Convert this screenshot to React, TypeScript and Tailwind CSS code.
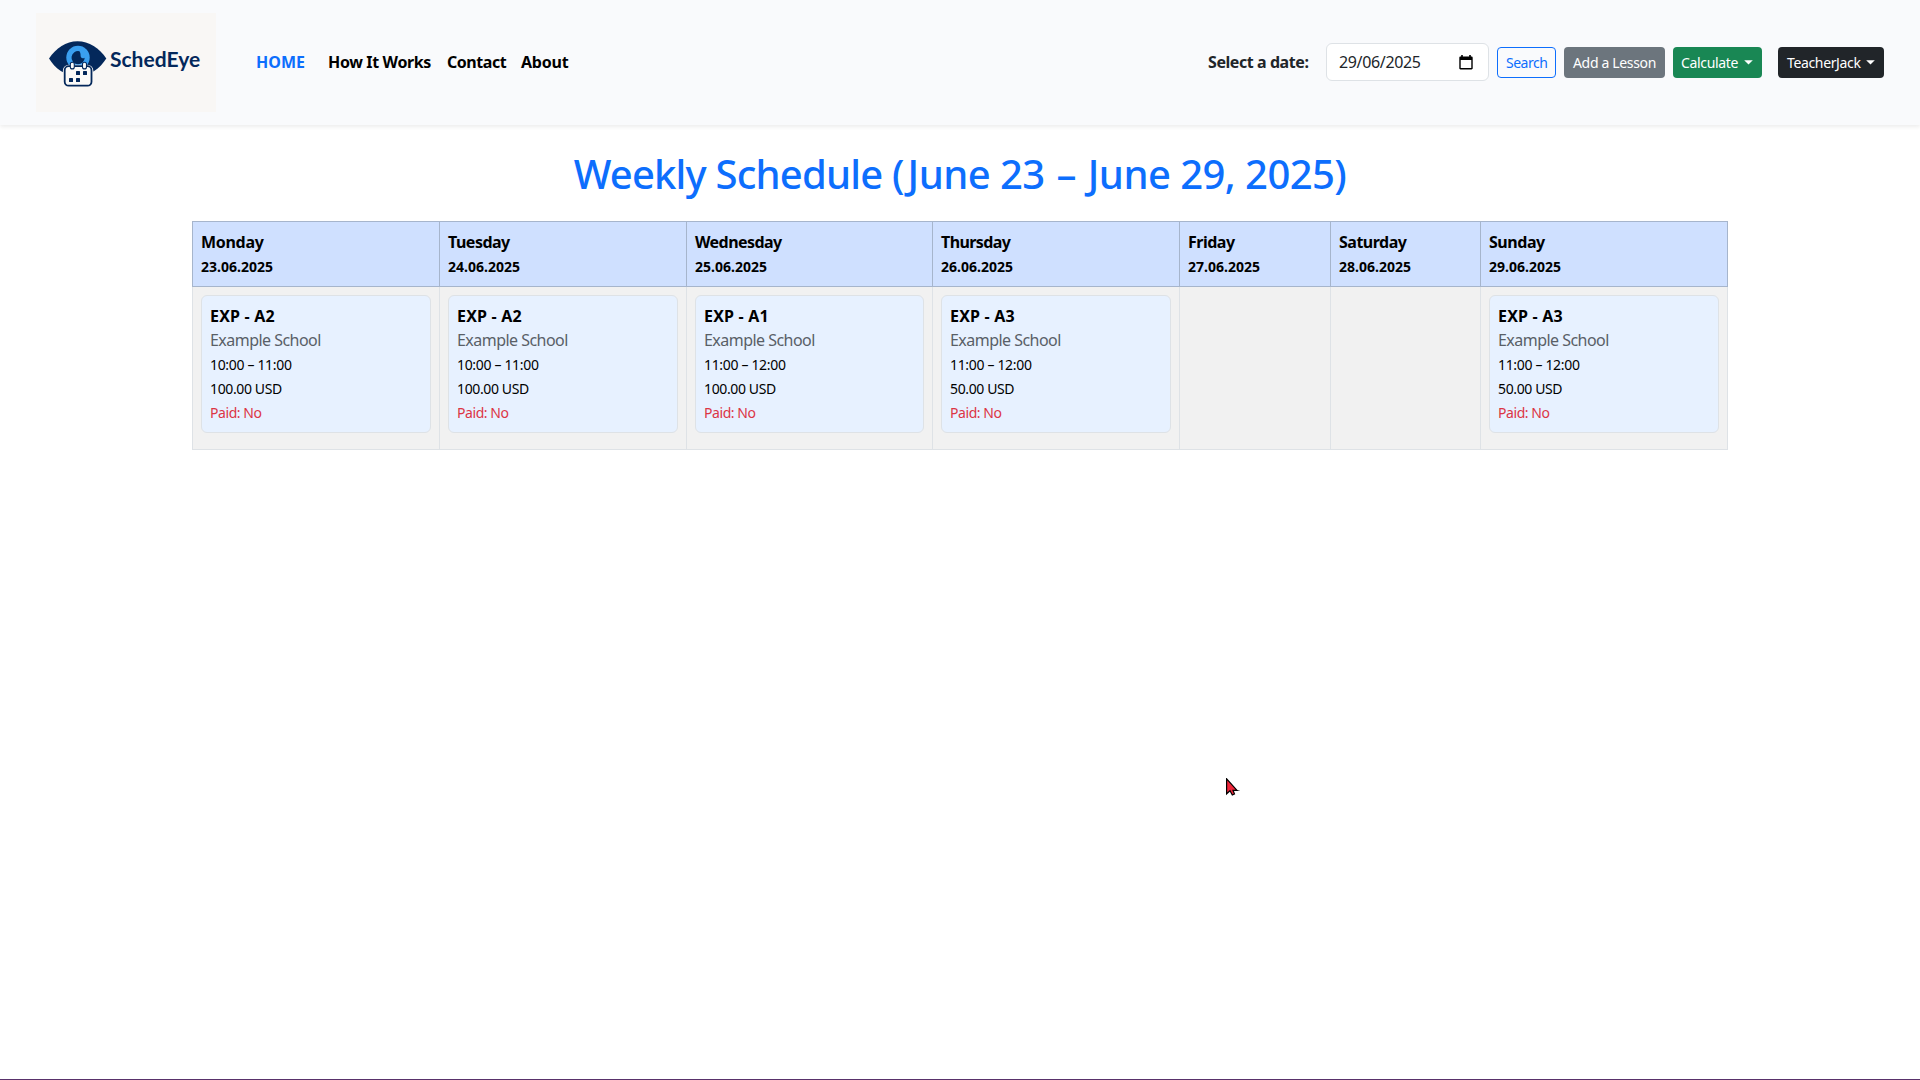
const days = [
  { name: "Monday", track: "tracking-[-0.3px]", date: "23.06.2025", lesson: { title: "EXP - A2", time: "10:00 – 11:00", price: "100.00 USD" } },
  { name: "Tuesday", track: "tracking-[-0.5px]", date: "24.06.2025", lesson: { title: "EXP - A2", time: "10:00 – 11:00", price: "100.00 USD" } },
  { name: "Wednesday", track: "tracking-[-0.55px]", date: "25.06.2025", lesson: { title: "EXP - A1", time: "11:00 – 12:00", price: "100.00 USD" } },
  { name: "Thursday", track: "tracking-[-0.6px]", date: "26.06.2025", lesson: { title: "EXP - A3", time: "11:00 – 12:00", price: "50.00 USD" } },
  { name: "Friday", track: "tracking-[-0.5px]", date: "27.06.2025", lesson: null },
  { name: "Saturday", track: "tracking-[-0.5px]", date: "28.06.2025", lesson: null },
  { name: "Sunday", track: "tracking-[-0.45px]", date: "29.06.2025", lesson: { title: "EXP - A3", time: "11:00 – 12:00", price: "50.00 USD" } },
];

const columns = "grid grid-cols-[247px_247px_246px_247px_151px_150px_247px]";

function Logo() {
  return (
    <div className="mt-px flex h-[99px] w-[180px] items-start bg-[#f9f7f5] pl-[13px]">
      <svg className="mt-[27px] shrink-0" width="58" height="48" viewBox="49 40 58 48">
        <path d="M49 58.500C56 48 66 41.200 77.500 41.200S99.500 48 106.300 58.500C100 68.500 90 76 77.500 76S55 68.500 49 58.500Z" fill="#04285b" />
        <circle cx="78" cy="57.500" r="11.700" fill="#3a9ff0" />
        <path d="M79.500 51.200a6.600 6.600 0 1 0 5.200 6.600c-.6.9-3.400.4-3.900-1.100-.5-1.400.3-2.800-1.300-5.500Z" fill="#04285b" />
        <rect x="64.700" y="66.500" width="26.800" height="19.300" rx="4" fill="#fbfaf8" stroke="#f9f7f5" strokeWidth="3.600" />
        <rect x="64.700" y="66.200" width="26.800" height="19.500" rx="4" fill="#fbfaf8" stroke="#04285b" strokeWidth="1.800" />
        <rect x="70.300" y="62.300" width="4" height="6.600" rx="2" fill="#fbfaf8" stroke="#04285b" strokeWidth="1.100" />
        <rect x="82.500" y="62.300" width="4" height="6.600" rx="2" fill="#fbfaf8" stroke="#04285b" strokeWidth="1.100" />
        <g fill="#04285b">
          <rect x="76" y="71" width="4" height="4" rx=".5" />
          <rect x="83" y="71" width="4" height="4" rx=".5" />
          <rect x="69" y="78" width="4" height="4" rx=".5" />
          <rect x="76" y="78" width="4" height="4" rx=".5" />
        </g>
      </svg>
      <span className="ml-[3px] mt-[34px] font-['Lato',sans-serif] text-[21px] font-bold leading-6 text-[#04285b]">SchedEye</span>
    </div>
  );
}

function Caret() {
  return (
    <svg className="ml-auto shrink-0" width="9" height="5" viewBox="0 0 9 5" fill="currentColor">
      <path d="M.2.200H8.800L4.500 4.600Z" />
    </svg>
  );
}

function Navbar() {
  return (
    <header className="flex h-[125px] items-center bg-[#f9fafc] px-9 pb-px shadow-[0_2px_4px_rgba(0,0,0,0.075)]">
      <Logo />
      <nav className="ml-10 flex whitespace-nowrap font-bold text-black">
        <a className="w-[72px] text-[#0d6efd]">HOME</a>
        <a className="w-[119px] tracking-[-0.36px]">How It Works</a>
        <a className="w-[74px] tracking-[-0.45px]">Contact</a>
        <a className="tracking-[-0.2px]">About</a>
      </nav>
      <form className="ml-auto flex items-center whitespace-nowrap">
        <label className="w-[118px] font-bold tracking-[-0.43px]">Select a date:</label>
        <div className="flex h-[38px] w-[163px] items-center justify-between rounded-md border border-[#dee2e6] bg-white pl-3 pr-[15px]">
          <span className="tracking-[-0.35px]">29/06/2025</span>
          <svg width="14" height="15" viewBox="0 0 14 15">
            <path d="M2.200 0h1.600v1.500h6.400V0h1.600v1.500h.7c.7 0 1.200.5 1.200 1.200v10.600c0 .7-.5 1.200-1.200 1.200h-11C.8 14.500.300 14 .300 13.300V2.700C.300 2 .8 1.500 1.500 1.500h.7ZM1.700 5v8.100h10.600V5Z" fill="#000" fillRule="evenodd" />
          </svg>
        </div>
        <div className="ml-2 mt-px flex h-[31px] gap-2 text-sm leading-[21px]">
          <div className="flex w-[59px] items-center rounded border border-[#0d6efd] pl-2 tracking-[-0.5px] text-[#0d6efd]">Search</div>
          <div className="flex w-[101px] items-center rounded bg-[#6c757d] pl-[9px] tracking-[-0.34px] text-white">Add a Lesson</div>
          <div className="flex w-[89px] items-center rounded bg-[#198754] pl-2 pr-[9px] tracking-[-0.35px] text-white">Calculate<Caret /></div>
          <div className="ml-2 flex w-[106px] items-center rounded bg-[#212529] px-[9px] tracking-[-0.36px] text-white">TeacherJack<Caret /></div>
        </div>
      </form>
    </header>
  );
}

function Pointer() {
  return (
    <svg className="absolute left-[1226px] top-[778px]" width="14" height="18" viewBox="0 0 14 18">
      <path d="M9 12.500h4.500" stroke="#777" strokeWidth="1" />
      <path d="M.6.800V15.800L4 12.800l2.300 4.200 2.200-1L7 12.300h4Z" fill="#f0263a" stroke="#000" strokeWidth="1.200" />
    </svg>
  );
}

export default function App() {
  return (
    <div className="relative flex h-[1080px] w-[1920px] flex-col overflow-hidden bg-white font-['Noto_Sans',sans-serif] text-base text-[#212529]">
      <Navbar />
      <main className="mx-auto w-[1536px] grow pt-[25px]">
        <h1 className="mb-[23px] text-center text-[40px] font-medium leading-[48px] tracking-[-0.55px] whitespace-nowrap text-[#0d6efd]">
          <span className="tracking-[-0.8px]">Weekly Schedule </span>
          (June 23<span className="[word-spacing:2px]"> – </span>June 29, 2025)
        </h1>
        <div className={`${columns} h-[66px] border border-r-0 border-[#a6b5cc] bg-[#cfe0ff] text-black`}>
          {days.map((d) => (
            <div key={d.name} className="border-r border-[#a6b5cc] p-2 font-bold">
              <div className={d.track}>{d.name}</div>
              <div><span className="text-sm leading-none">{d.date}</span></div>
            </div>
          ))}
        </div>
        <div className={`${columns} h-[163px] border-b border-l border-[#dee2e6] bg-[#f1f1f1] text-black`}>
          {days.map((d) => (
            <div key={d.name} className="border-r border-[#dee2e6] p-2">
              {d.lesson && (
                <div className="h-[138px] rounded-md border border-[#dee2e6] bg-[#e7f1ff] p-2">
                  <div className="font-bold tracking-[0.2px]">{d.lesson.title}</div>
                  <div className="tracking-[-0.53px] text-[#595f67]">Example School</div>
                  <div><span className="text-sm leading-none tracking-[-0.33px]">{d.lesson.time}</span></div>
                  <div><span className="text-sm leading-none tracking-[-0.38px]">{d.lesson.price}</span></div>
                  <div><span className="text-sm leading-none tracking-[-0.43px] text-[#dc3545]">Paid: No</span></div>
                </div>
              )}
            </div>
          ))}
        </div>
      </main>
      <div className="h-px bg-[#59316b]" />
      <Pointer />
    </div>
  );
}
